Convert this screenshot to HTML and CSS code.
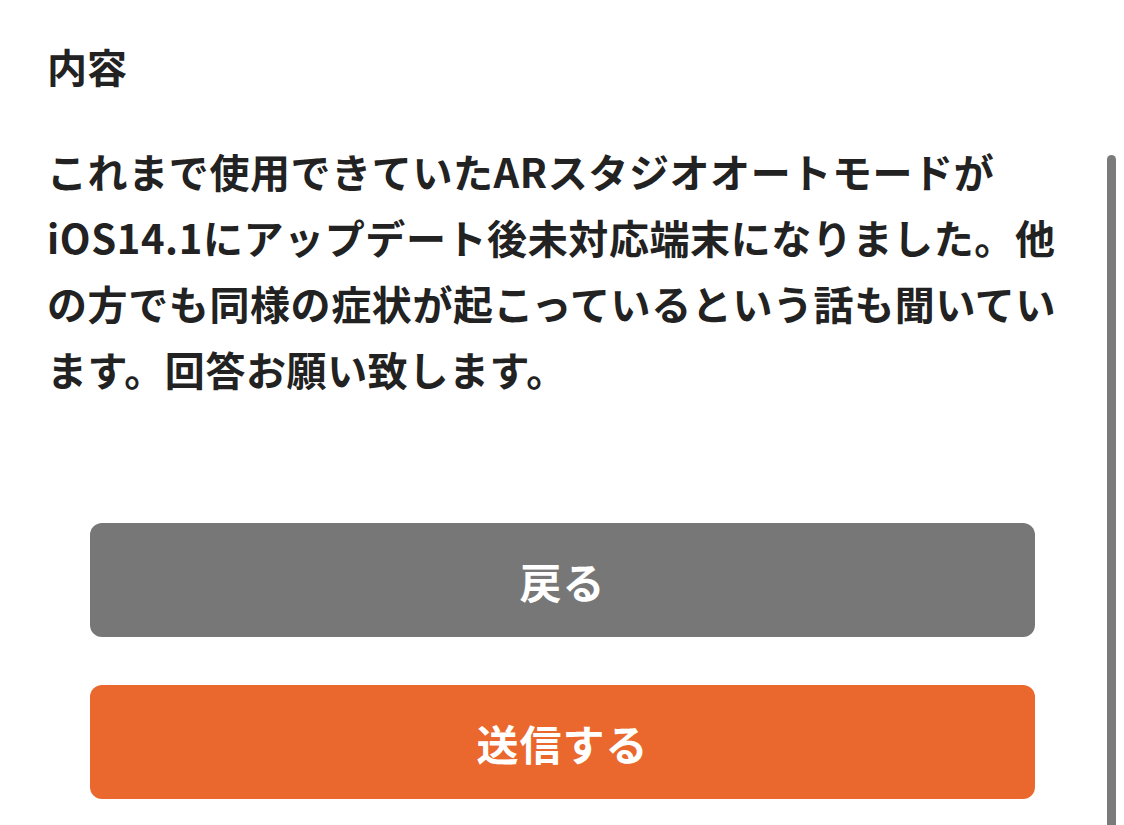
FILE: index.html
```html
<!DOCTYPE html>
<html lang="ja">
<head>
<meta charset="utf-8">
<title>内容</title>
<link rel="stylesheet" href="styles.css">
</head>
<body>
<main class="page">
  <h2 class="label">内容</h2>
  <p class="content">これまで使用できていたARスタジオオートモードがiOS14.1にアップデート後未対応端末になりました。他の方でも同様の症状が起こっているという話も聞いています。回答お願い致します。</p>
  <div class="actions">
    <button class="btn btn-back" type="button">戻る</button>
    <button class="btn btn-submit" type="button">送信する</button>
  </div>
</main>
<div class="scrollbar"></div>
</body>
</html>
```

FILE: styles.css
```css
html, body {
  margin: 0;
  padding: 0;
  background: #ffffff;
  overflow: hidden;
}

body {
  width: 1124px;
  height: 825px;
  position: relative;
  font-family: "Noto Sans CJK JP", "Noto Sans", sans-serif;
  color: #222222;
}

.page {
  display: flex;
  flex-direction: column;
  padding: 36px 0 0 47px;
  width: 1030px;
}

.label {
  margin: 0;
  font-size: 40px;
  font-weight: 700;
  line-height: 60px;
}

.content {
  margin: 42px 0 0 0;
  font-size: 40px;
  font-weight: 700;
  line-height: 66px;
  letter-spacing: 0.6px;
  width: 1030px;
}

.actions {
  display: flex;
  flex-direction: column;
  gap: 48px;
  margin: 121px 0 0 43px;
  width: 945px;
}

.btn {
  height: 114px;
  border: none;
  border-radius: 12px;
  color: #ffffff;
  font-family: "Noto Sans CJK JP", "Noto Sans", sans-serif;
  font-size: 42px;
  font-weight: 700;
  letter-spacing: 1px;
  padding: 0;
}

.btn-back {
  background: #777777;
}

.btn-submit {
  background: #ea682d;
}

.scrollbar {
  position: absolute;
  left: 1107px;
  top: 155px;
  width: 9px;
  height: 700px;
  border-radius: 5px;
  background: #7b7b7b;
}
```
